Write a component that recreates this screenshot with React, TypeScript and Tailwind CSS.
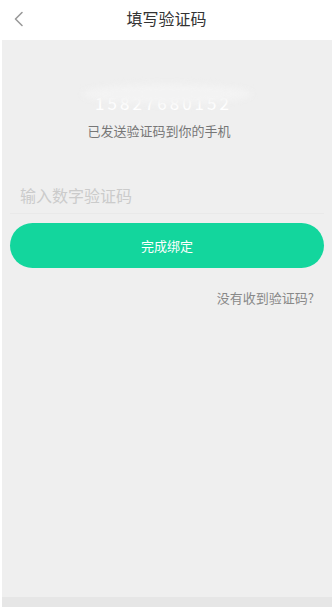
import React from 'react';

const App: React.FC = () => {
	return <div className="min-h-screen h-[607px] bg-white flex flex-col" style={{ fontFamily: '"Noto Sans CJK SC", "Noto Sans", sans-serif' }}>
		<div className="h-10 relative flex items-center justify-center bg-white">
			<button className="absolute left-[13px] top-[11px] p-0">
				<svg width="12" height="16" viewBox="0 0 12 16" fill="none">
					<polyline points="9,1.5 2.5,8 9,14.5" stroke="#9a9a9a" strokeWidth="1.6" strokeLinecap="round" strokeLinejoin="round" />
				</svg>
			</button>
			<h1 className="text-[16px] leading-none text-[#333] -mt-1">填写验证码</h1>
		</div>
		<div className="flex-1 bg-[#efefef] ml-[2px] mr-px flex flex-col">
			{/* phone number, mostly washed out by a light haze */}
			<div className="relative mt-[52px] flex justify-center pr-[10px]">
				<span className="text-[17px] leading-[22px] text-white tracking-[3px] pl-[3px]">15827680152</span>
				<div className="absolute left-1/2 -translate-x-1/2 -top-[8px] w-[170px] h-[20px] rounded-[50%] bg-[#f3f3f3] blur-[3px]"></div>
			</div>
			<p className="mt-[8px] pr-4 text-center text-[13px] leading-[18px] text-[#777]">已发送验证码到你的手机</p>
			<div className="mt-[37px] mx-[8px] border-b border-[#e9e9e9]">
				<input
					className="w-full h-9 pl-[10px] bg-transparent outline-none text-[16px] text-[#333] placeholder:text-[#cbcbcb]"
					placeholder="输入数字验证码"
				/>
			</div>
			<button className="mt-[9px] mx-[8px] h-[45px] rounded-full bg-[#13d69d] text-white text-[13px]">完成绑定</button>
			<div className="mt-[21px] pr-[18px] flex justify-end">
				<span className="text-[13px] leading-[18px] text-[#888]">没有收到验证码?</span>
			</div>
		</div>
		<div className="h-[10px] bg-[#e6e6e6] ml-[2px] mr-px"></div>
	</div>
};

export default App;
